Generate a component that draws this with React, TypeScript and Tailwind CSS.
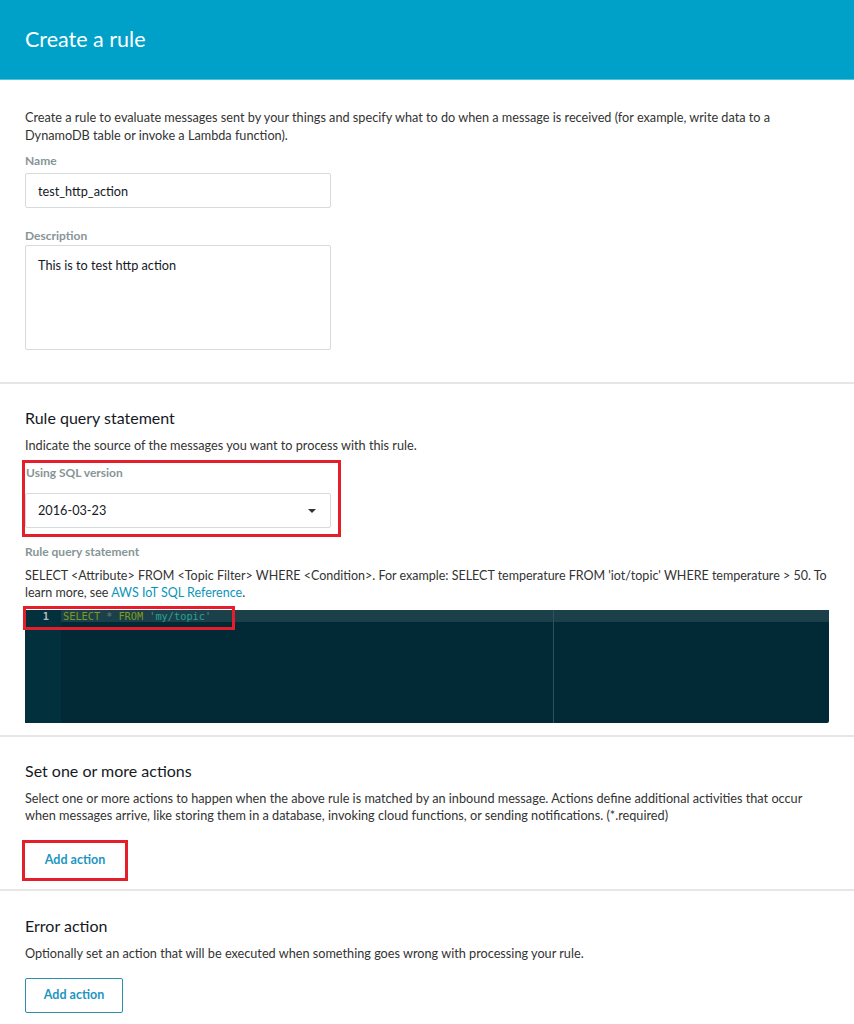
import { useState } from "react";

const font = { fontFamily: "Lato, 'Noto Sans', Arial, sans-serif" };

function Label({ children }: { children: React.ReactNode }) {
    return <p className="text-[12px] font-bold text-[#879596] leading-[16px]">{children}</p>
}

function AddButton() {
    return (
        <button className="h-[35px] w-[98px] border border-[#2b8fac] bg-white rounded-[2px] text-[12.5px] font-bold text-[#1d96bf]">Add action</button>
    )
}

export default function App() {
    const [name, setName] = useState("test_http_action");
    const [desc, setDesc] = useState("This is to test http action");

    return (
        <div className="min-h-screen bg-white text-[#16191f]" style={font}>
            <div className="h-[80px] bg-[#00a1c9] flex items-center px-[25px] border-b border-[#4fc3dc]">
                <h1 className="text-[21.5px] text-white font-normal">Create a rule</h1>
            </div>

            {/* intro */}
            <div className="px-[25px] pt-[28px] pb-[32px] border-b-2 border-[#e6e6e6]">
                <p className="text-[12.7px] leading-[18px] text-[#333] pr-[30px]">
                    Create a rule to evaluate messages sent by your things and specify what to do when a message is received (for example, write data to a DynamoDB table or invoke a Lambda function).
                </p>
                <div className="mt-[9px]">
                    <Label>Name</Label>
                    <input value={name} onChange={(e) => setName(e.target.value)}
                        className="mt-[4px] w-[306px] h-[35px] border border-[#d5dbdb] rounded-[2px] px-[12px] text-[12.7px] text-[#16191f] outline-none" />
                </div>
                <div className="mt-[20px]">
                    <Label>Description</Label>
                    <textarea value={desc} onChange={(e) => setDesc(e.target.value)}
                        className="mt-[1px] block w-[306px] h-[105px] border border-[#d5dbdb] rounded-[2px] px-[12px] py-[10px] text-[12.7px] text-[#16191f] outline-none resize-none" />
                </div>
            </div>

            {/* query */}
            <div className="px-[25px] pt-[23px] pb-[12px] border-b-2 border-[#e6e6e6]">
                <h2 className="text-[16px] leading-[22px] text-[#16191f]">Rule query statement</h2>
                <p className="mt-[7px] text-[12.7px] leading-[18px] text-[#333]">Indicate the source of the messages you want to process with this rule.</p>
                <div className="mt-[6px] -ml-[3px] w-[319px] border-[3px] border-[#e41e2b] pt-[2px] pb-[6px]">
                    <div className="pl-[1px]"><Label>Using SQL version</Label></div>
                    <div className="mt-[12px] w-[306px] h-[35px] border border-[#d5dbdb] rounded-[2px] px-[12px] flex items-center justify-between">
                        <span className="text-[12.7px]">2016-03-23</span>
                        <svg width="10" height="6" viewBox="0 0 10 6" className="mr-[1px]"><path d="M1 1h8L5 5z" fill="#333" /></svg>
                    </div>
                </div>
                <div className="mt-[7px]">
                    <Label>Rule query statement</Label>
                </div>
                <p className="mt-[7px] text-[12.5px] leading-[17px] text-[#333]">
                    SELECT &lt;Attribute&gt; FROM &lt;Topic Filter&gt; WHERE &lt;Condition&gt;. For example: SELECT temperature FROM 'iot/topic' WHERE temperature &gt; 50. To learn more, see <span className="text-[#0a95b7]">AWS IoT SQL Reference</span>.
                </p>
                <div className="relative mt-[9px] h-[113px] w-[804px] bg-[#022936] rounded-[2px] flex">
                    <div className="w-[36px] bg-[#03303d] h-full"></div>
                    <div className="flex-1 relative">
                        <div className="h-[12px] bg-[#1c4049]"></div>
                        <div className="absolute top-0 bottom-0 left-[492px] w-px bg-[#2a5560]"></div>
                    </div>
                    <div className="absolute left-0 top-0 h-[12px] w-full flex items-center text-[10.3px] leading-[12px]" style={{ fontFamily: "'DejaVu Sans Mono', monospace" }}>
                        <span className="w-[24px] text-right text-[#a9bcc0] font-bold">1</span>
                        <span className="ml-[14px] text-[#7f9a1f]">SELECT</span>
                        <span className="ml-[6px] text-[#657b83]">*</span>
                        <span className="ml-[6px] text-[#7f9a1f]">FROM</span>
                        <span className="ml-[6px] text-[#2aa198]">'my/topic'</span>
                    </div>
                    <div className="absolute -left-[2px] -top-[4px] w-[212px] h-[24px] border-[3px] border-[#e41e2b]"></div>
                </div>
            </div>

            {/* actions */}
            <div className="px-[25px] pt-[23px] pb-[8px] border-b-2 border-[#e6e6e6]">
                <h2 className="text-[16px] leading-[22px]">Set one or more actions</h2>
                <p className="mt-[8px] text-[12.7px] leading-[17px] text-[#333] pr-[20px]">
                    Select one or more actions to happen when the above rule is matched by an inbound message. Actions define additional activities that occur when messages arrive, like storing them in a database, invoking cloud functions, or sending notifications. (*.required)
                </p>
                <div className="mt-[16px] -ml-[3px] w-[106px] h-[41px] border-[3px] border-[#e41e2b] flex items-center justify-center">
                    <span className="text-[12.5px] font-bold text-[#1d96bf]">Add action</span>
                </div>
            </div>

            {/* error action */}
            <div className="px-[25px] pt-[24px] pb-[12px]">
                <h2 className="text-[16px] leading-[22px]">Error action</h2>
                <p className="mt-[8px] text-[12.7px] leading-[17px] text-[#333]">Optionally set an action that will be executed when something goes wrong with processing your rule.</p>
                <div className="mt-[16px]">
                    <AddButton />
                </div>
            </div>
        </div>
    )
}
